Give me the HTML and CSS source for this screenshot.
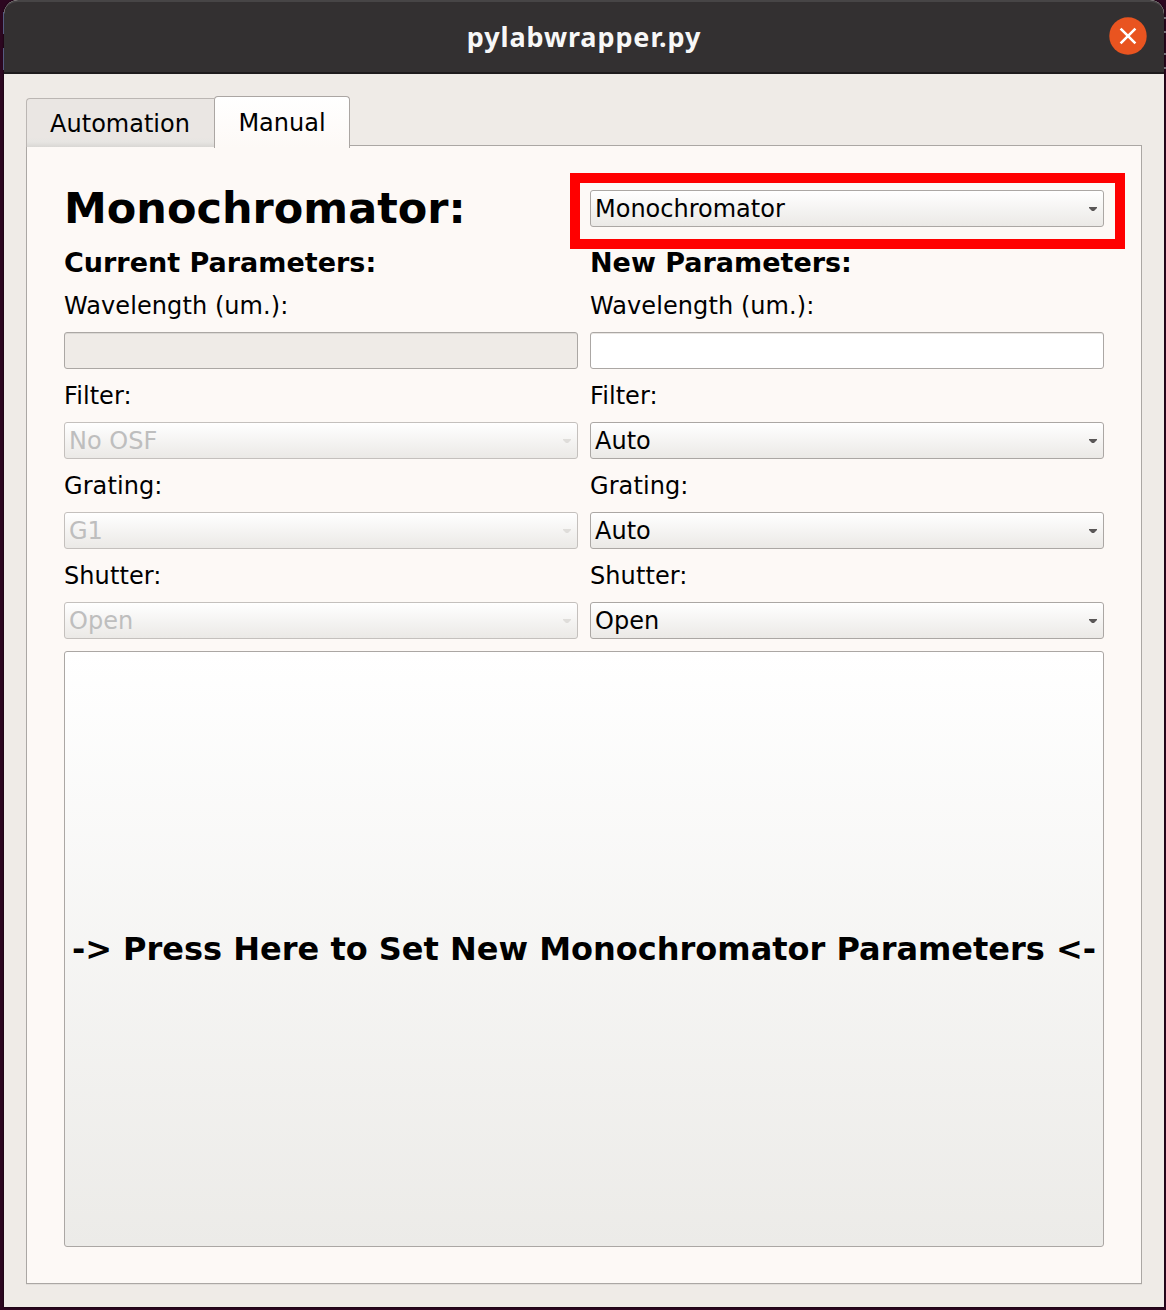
FILE: index.html
```html
<!DOCTYPE html>
<html lang="en">
<head>
<meta charset="utf-8">
<title>pylabwrapper.py</title>
<link rel="stylesheet" href="styles.css">
</head>
<body>
<div class="window">
  <header class="titlebar">
    <span class="title">pylabwrapper.py</span>
    <button class="close" aria-label="Close">
      <svg width="38" height="38" viewBox="0 0 38 38"><circle cx="19" cy="19" r="18.7" fill="#e95420"/><path d="M11.6 11.6 26.4 26.4M26.4 11.6 11.6 26.4" stroke="#fff" stroke-width="2.6"/></svg>
    </button>
  </header>
  <main class="content">
    <nav class="tabs">
      <div class="tab">Automation</div>
      <div class="tab active">Manual</div>
    </nav>
    <section class="pane">
      <h1>Monochromator:</h1>
      <div class="device">
        <div class="combo"><span>Monochromator</span><i class="arrow"></i></div>
        <div class="highlight"></div>
      </div>
      <h2>Current Parameters:</h2>
      <h2>New Parameters:</h2>
      <div class="label">Wavelength (um.):</div>
      <div class="label">Wavelength (um.):</div>
      <div class="field readonly"></div>
      <div class="field"></div>
      <div class="label">Filter:</div>
      <div class="label">Filter:</div>
      <div class="combo disabled"><span>No OSF</span><i class="arrow"></i></div>
      <div class="combo"><span>Auto</span><i class="arrow"></i></div>
      <div class="label">Grating:</div>
      <div class="label">Grating:</div>
      <div class="combo disabled"><span>G1</span><i class="arrow"></i></div>
      <div class="combo"><span>Auto</span><i class="arrow"></i></div>
      <div class="label">Shutter:</div>
      <div class="label">Shutter:</div>
      <div class="combo disabled"><span>Open</span><i class="arrow"></i></div>
      <div class="combo"><span>Open</span><i class="arrow"></i></div>
      <button class="apply">-&gt; Press Here to Set New Monochromator Parameters &lt;-</button>
    </section>
  </main>
</div>
<div class="backdrop-marks left"><i></i><i></i></div>
<div class="backdrop-marks right"><i></i><i></i><i></i><i></i></div>
</body>
</html>
```
FILE: styles.css
```css
* { box-sizing: border-box; }
body {
  margin: 0;
  height: 1310px;
  padding: 0 2px 3px 4px;
  background: #2c0720;
  color: #000;
  font: 24px/28px "DejaVu Sans", sans-serif;
  overflow: hidden;
}
.window {
  height: 1307px;
  display: flex;
  flex-direction: column;
  background: #efebe7;
  border-radius: 14px 14px 0 0;
  overflow: hidden;
  box-shadow: 0 0 2px #000;
}
.titlebar {
  height: 74px;
  flex: none;
  display: grid;
  grid-template-columns: 1fr auto 1fr;
  align-items: center;
  padding: 0 17px 2px 0;
  background: #333031;
  border-top: 2px solid #474546;
  border-bottom: 2px solid #1e1b1d;
  border-radius: 14px 14px 0 0;
}
.title {
  grid-column: 2;
  margin-left: 17px;
  padding-top: 2px;
  color: #f7f7f7;
  font: bold 27px/32px "Noto Sans", sans-serif;
  letter-spacing: 0.9px;
}
.close {
  justify-self: end;
  width: 38px;
  height: 38px;
  padding: 0;
  border: 0;
  background: none;
}
.close svg { display: block; }
.content {
  flex: 1;
  display: flex;
  flex-direction: column;
  padding: 22px 22px 23px;
  background: #efebe7;
}
.tabs {
  display: flex;
  align-items: flex-end;
  height: 52px;
  margin-bottom: -3px;
  position: relative;
}
.tab {
  width: 188px;
  height: 49px;
  margin-bottom: 1px;
  padding: 11px 1px 0 0;
  text-align: center;
  border: 1px solid #bbb6b3;
  border-width: 1px 0 0 1px;
  border-radius: 4px 0 0 0;
  background: linear-gradient(#eae6e3 0 38px, #e7e5e2 43px, #d9d7d4 48px);
}
.tab.active {
  width: 136px;
  height: 52px;
  margin-bottom: 0;
  padding: 12px 0 0;
  border: 1px solid #aba6a3;
  border-bottom: 0;
  border-radius: 4px 4px 0 0;
  background: linear-gradient(#fff, #fdf9f6);
}
.pane {
  flex: 1;
  display: grid;
  grid-template-columns: 1fr 1fr;
  grid-template-rows: 55px 32px 28px 37px 29px 37px 29px 37px 29px 37px 1fr;
  gap: 12px;
  padding: 35px 37px 36px;
  border: 1px solid #aba7a4;
  background: #fdf9f6;
  box-shadow: 0 1px #e2deda;
}
h1, h2 { margin: 0; font-weight: bold; white-space: nowrap; }
h1 { font-size: 43px; line-height: 55px; }
h2 { font-size: 27px; line-height: 30px; }
.label { align-self: end; line-height: 28px; letter-spacing: 0.08px; }
.device { position: relative; display: grid; align-items: center; }
.highlight {
  position: absolute;
  inset: -8px -21px -13px -20px;
  border: 10px solid #f00;
}
.combo, .field {
  height: 37px;
  border: 1px solid #aba7a4;
  border-radius: 3px;
}
.field { background: #fff; box-shadow: inset 0 1px #e8e5e2; }
.field.readonly { background: #efebe7; box-shadow: inset 0 1px #dbd8d4; }
.combo {
  display: flex;
  align-items: center;
  justify-content: space-between;
  padding: 0 6px 0 4px;
  background: linear-gradient(#fff, #ebe9e6);
}
.arrow {
  width: 8px;
  height: 4px;
  margin-top: 1px;
  background: #5a5757;
  clip-path: polygon(0 0, 100% 0, 100% 25%, 62% 100%, 38% 100%, 0 25%);
}
.combo.disabled { color: #bebebe; border-color: #c4c0bd; }
.combo.disabled .arrow { background: #dfddda; }
.apply {
  grid-column: 1 / -1;
  padding: 0;
  border: 1px solid #aba7a4;
  border-radius: 3px;
  background: linear-gradient(#fff, #ecebe8);
  color: #000;
  font: bold 32px/38px "DejaVu Sans", sans-serif;
  white-space: nowrap;
}
/* Edges of the desktop visible beside the window frame */
.backdrop-marks { position: absolute; top: 0; display: flex; flex-direction: column; }
.left { left: 3px; width: 1px; padding-top: 12px; gap: 14px; }
.left i { height: 22px; background: #555a80; }
.right { left: 1164px; width: 2px; padding-top: 17px; }
.right i { height: 2px; background: #77707a; margin-bottom: 12px; }
.right i:nth-child(2) { margin-bottom: 20px; }
```
